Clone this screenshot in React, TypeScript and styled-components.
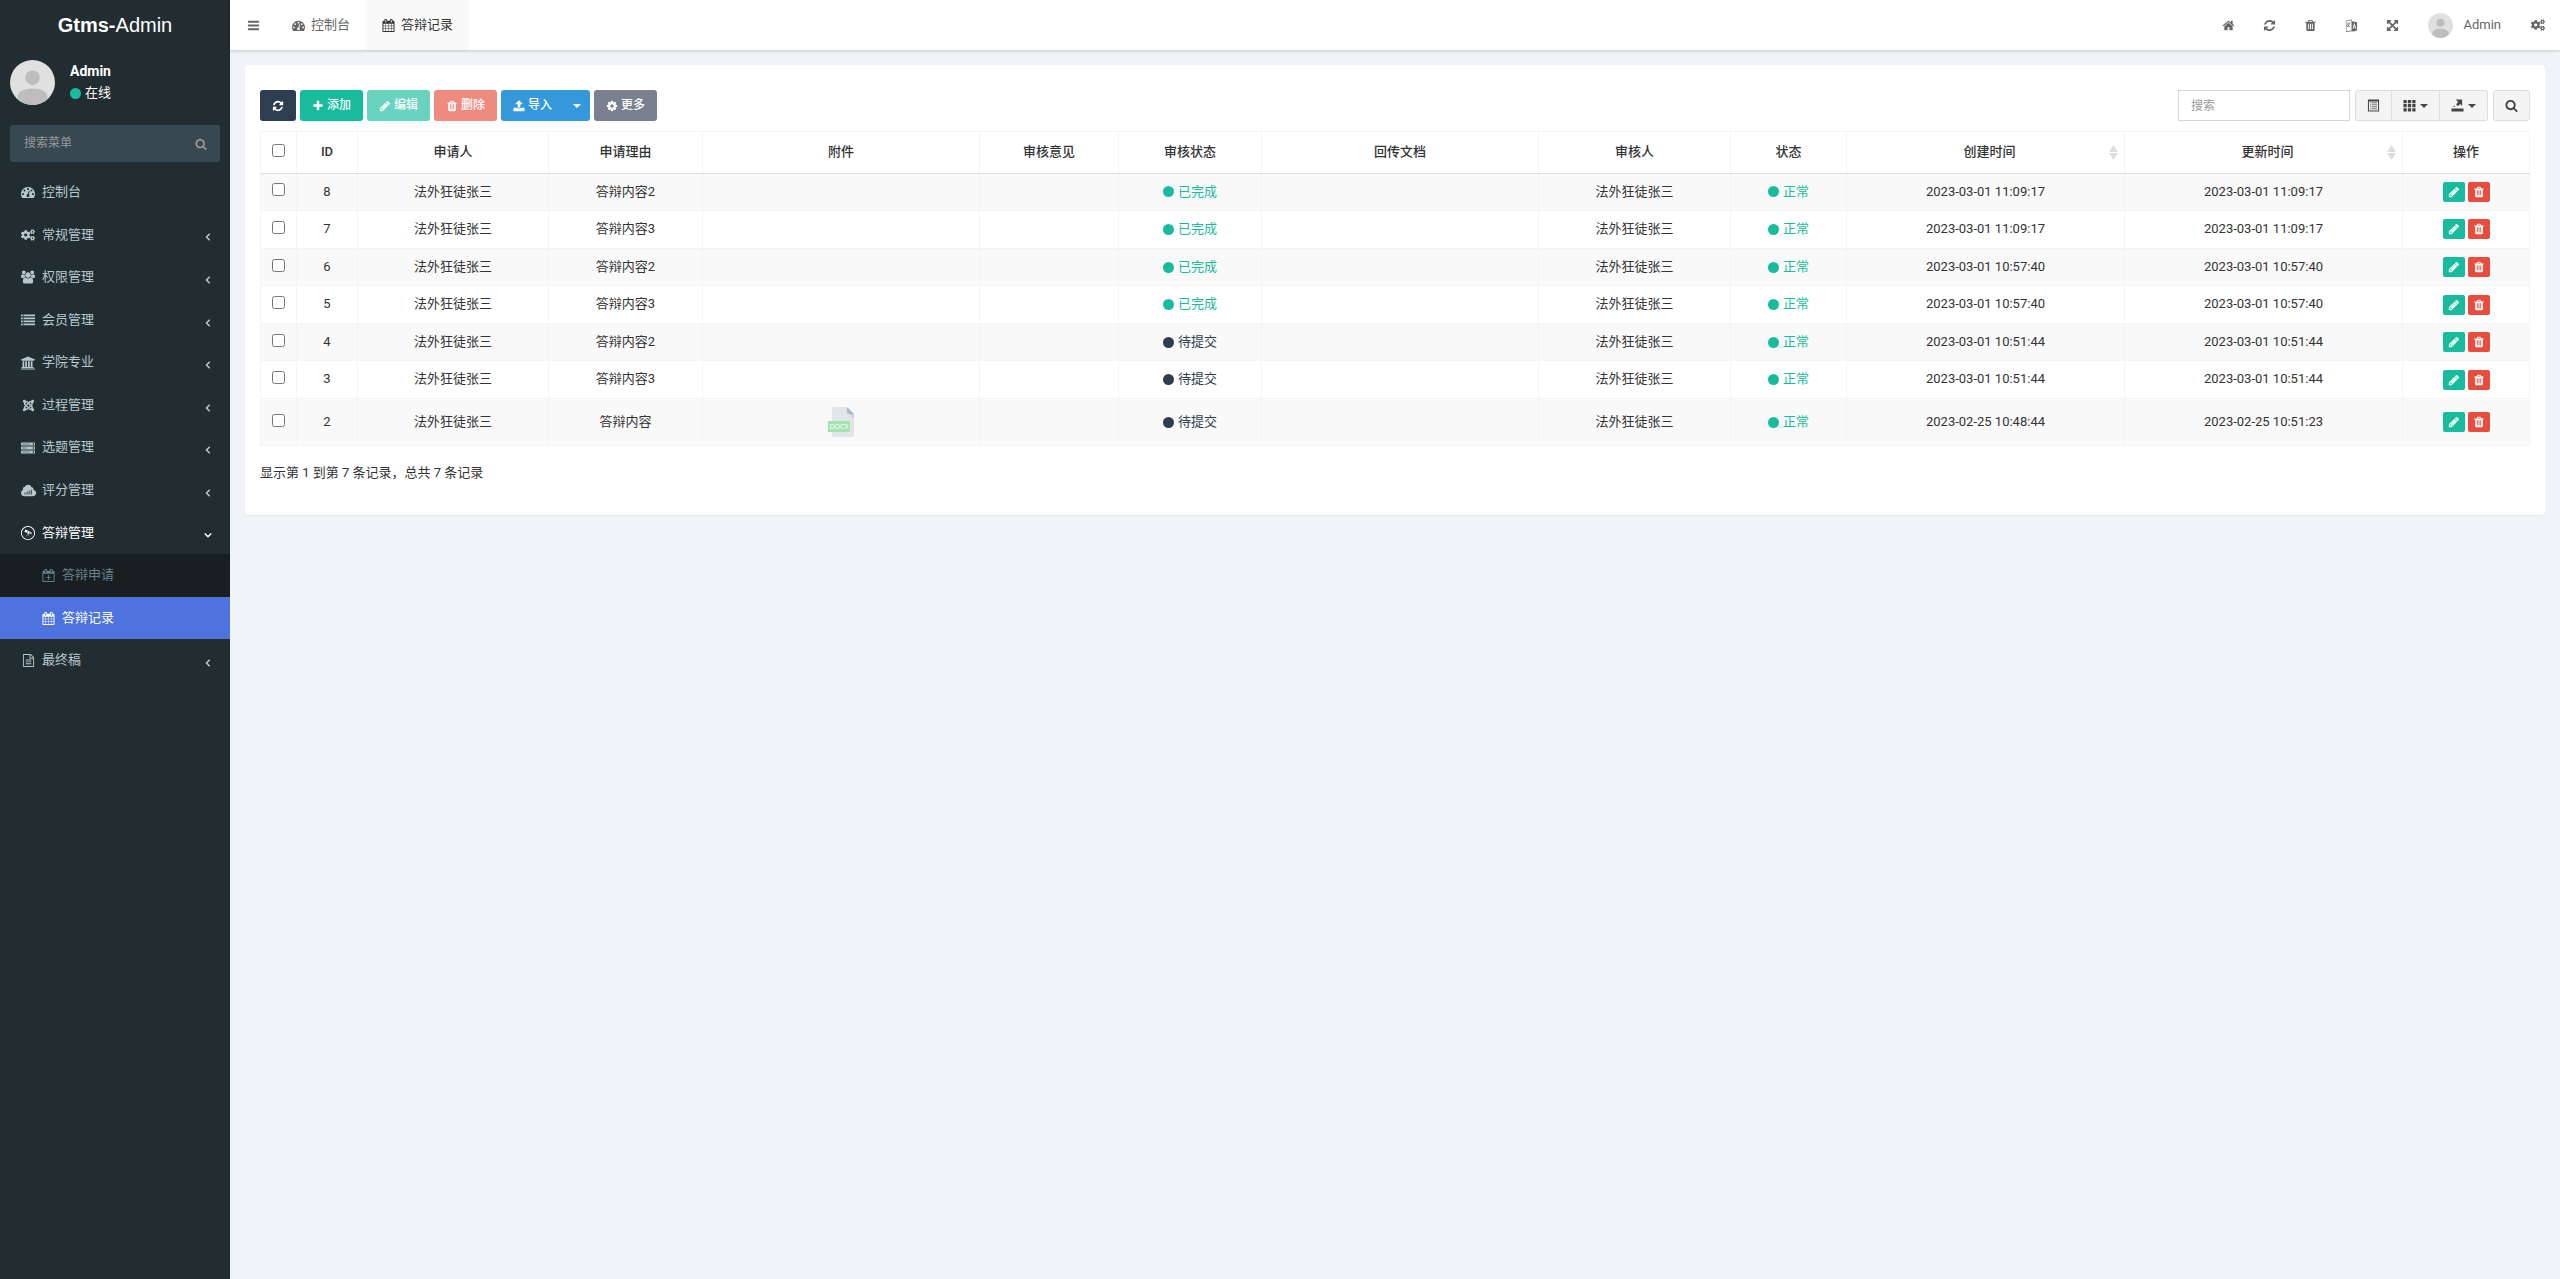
import React, { useState } from "react";
import styled, { createGlobalStyle, css } from "styled-components";
import { FaCogs, FaJoomla, FaWpexplorer } from "react-icons/fa";

const GlobalStyle = createGlobalStyle`
  * { box-sizing: border-box; }
  body {
    margin: 0;
    background: #f0f3f7;
    color: #333;
    font-family: Roboto, "Noto Sans CJK SC", sans-serif;
    font-size: 13px;
    line-height: 1.43;
  }
  button, input { font: inherit; }
  button { cursor: pointer; }
  a { color: inherit; text-decoration: none; }
`;

/* ---------- icons ---------- */

const PATHS = {
  refresh:
    "M1639 1056q0 5-1 7-64 268-268 434.5t-478 166.5q-146 0-282.5-55t-243.5-157l-129 129q-19 19-45 19t-45-19-19-45v-448q0-26 19-45t45-19h448q26 0 45 19t19 45-19 45l-137 137q71 66 161 102t187 36q134 0 250-65t186-179q11-17 53-117 8-23 30-23h192q13 0 22.5 9.5t9.5 22.5zm25-800v448q0 26-19 45t-45 19h-448q-26 0-45-19t-19-45 19-45l138-138q-148-137-349-137-134 0-250 65t-186 179q-11 17-53 117-8 23-30 23h-199q-13 0-22.5-9.5t-9.5-22.5v-7q65-268 270-434.5t480-166.5q146 0 284 55.5t245 156.5l130-129q19-19 45-19t45 19 19 45z",
  search:
    "M1216 832q0-185-131.5-316.5t-316.5-131.5-316.5 131.5-131.5 316.5 131.5 316.5 316.5 131.5 316.5-131.5 131.5-316.5zm512 832q0 52-38 90t-90 38q-54 0-90-38l-343-342q-179 124-399 124-143 0-273.5-55.5t-225-150-150-225-55.5-273.5 55.5-273.5 150-225 225-150 273.5-55.5 273.5 55.5 225 150 150 225 55.5 273.5q0 220-124 399l343 343q37 37 37 90z",
  bars:
    "M1664 1344v128q0 26-19 45t-45 19h-1408q-26 0-45-19t-19-45v-128q0-26 19-45t45-19h1408q26 0 45 19t19 45zm0-512v128q0 26-19 45t-45 19h-1408q-26 0-45-19t-19-45v-128q0-26 19-45t45-19h1408q26 0 45 19t19 45zm0-512v128q0 26-19 45t-45 19h-1408q-26 0-45-19t-19-45v-128q0-26 19-45t45-19h1408q26 0 45 19t19 45z",
  plus:
    "M1600 736v192q0 40-28 68t-68 28h-416v416q0 40-28 68t-68 28h-192q-40 0-68-28t-28-68v-416h-416q-40 0-68-28t-28-68v-192q0-40 28-68t68-28h416v-416q0-40 28-68t68-28h192q40 0 68 28t28 68v416h416q40 0 68 28t28 68z",
  dashboard:
    "M384 1152q0-53-37.5-90.5t-90.5-37.5-90.5 37.5-37.5 90.5 37.5 90.5 90.5 37.5 90.5-37.5 37.5-90.5zm192-448q0-53-37.5-90.5t-90.5-37.5-90.5 37.5-37.5 90.5 37.5 90.5 90.5 37.5 90.5-37.5 37.5-90.5zm428 481l101-382q6-26-7.5-48.5t-38.5-29.5-48 6.5-30 39.5l-101 382q-60 5-107 43.5t-63 98.5q-20 77 20 146t117 89 146-20 89-117q16-60-6-117t-72-91zm660-33q0-53-37.5-90.5t-90.5-37.5-90.5 37.5-37.5 90.5 37.5 90.5 90.5 37.5 90.5-37.5 37.5-90.5zm-640-640q0-53-37.5-90.5t-90.5-37.5-90.5 37.5-37.5 90.5 37.5 90.5 90.5 37.5 90.5-37.5 37.5-90.5zm448 192q0-53-37.5-90.5t-90.5-37.5-90.5 37.5-37.5 90.5 37.5 90.5 90.5 37.5 90.5-37.5 37.5-90.5zm320 448q0 261-141 483-19 29-54 29h-1402q-35 0-54-29-141-221-141-483 0-182 71-348t191-286 286-191 348-71 348 71 286 191 191 286 71 348z",
  home:
    "M1472 992v480q0 26-19 45t-45 19h-384v-384h-256v384h-384q-26 0-45-19t-19-45v-480q0-1 .5-3t.5-3l575-474 575 474q1 2 1 6zm223-69l-62 74q-8 9-21 11h-3q-13 0-21-7l-692-577-692 577q-12 8-24 7-13-2-21-11l-62-74q-8-10-7-23.5t11-21.5l719-599q32-26 76-26t76 26l244 204v-195q0-14 9-23t23-9h192q14 0 23 9t9 23v408l219 182q10 8 11 21.5t-7 23.5z",
  trash:
    "M704 1376v-704q0-14-9-23t-23-9h-64q-14 0-23 9t-9 23v704q0 14 9 23t23 9h64q14 0 23-9t9-23zm256 0v-704q0-14-9-23t-23-9h-64q-14 0-23 9t-9 23v704q0 14 9 23t23 9h64q14 0 23-9t9-23zm256 0v-704q0-14-9-23t-23-9h-64q-14 0-23 9t-9 23v704q0 14 9 23t23 9h64q14 0 23-9t9-23zm-544-992h448l-48-117q-7-9-17-11h-317q-10 2-17 11zm928 32v64q0 14-9 23t-23 9h-96v948q0 83-47 143.5t-113 60.5h-832q-66 0-113-58.5t-47-141.5v-952h-96q-14 0-23-9t-9-23v-64q0-14 9-23t23-9h309l70-167q15-37 54-63t79-26h320q40 0 79 26t54 63l70 167h309q14 0 23 9t9 23z",
  pencil:
    "M491 1536l91-91-235-235-91 91v107h128v128h107zm523-928q0-22-22-22-10 0-17 7l-542 542q-7 7-7 17 0 22 22 22 10 0 17-7l542-542q7-7 7-17zm-54-192l416 416-832 832h-416v-416zm683 96q0 53-37 90l-166 166-416-416 166-165q36-38 90-38 53 0 91 38l235 234q37 39 37 91z",
  cog:
    "M1152 896q0-106-75-181t-181-75-181 75-75 181 75 181 181 75 181-75 75-181zm512-109v222q0 12-8 23t-20 13l-185 28q-19 54-39 91 35 50 107 138 10 12 10 25t-9 23q-27 37-99 108t-94 71q-12 0-26-9l-138-108q-44 23-91 38-16 136-29 186-7 28-36 28h-222q-14 0-24.5-8.5t-11.5-21.5l-28-184q-49-16-90-37l-141 107q-10 9-25 9-14 0-25-11-126-114-165-168-7-10-7-23 0-12 8-23 15-21 51-66.5t54-70.5q-27-50-41-99l-183-27q-13-2-21-12.5t-8-23.5v-222q0-12 8-23t19-13l186-28q14-46 39-92-40-57-107-138-10-12-10-24 0-10 9-23 26-36 98.5-107.5t94.5-71.5q13 0 26 10l138 107q44-23 91-38 16-136 29-186 7-28 36-28h222q14 0 24.5 8.5t11.5 21.5l28 184q49 16 90 37l142-107q9-9 24-9 13 0 25 10 129 119 165 170 7 8 7 22 0 12-8 23-15 21-51 66.5t-54 70.5q26 50 41 98l183 28q13 2 21 12.5t8 23.5z",
  upload:
    "M1344 1472q0-26-19-45t-45-19-45 19-19 45 19 45 45 19 45-19 19-45zm256 0q0-26-19-45t-45-19-45 19-19 45 19 45 45 19 45-19 19-45zm128-224v320q0 40-28 68t-68 28h-1472q-40 0-68-28t-28-68v-320q0-40 28-68t68-28h427q21 56 70.5 92t110.5 36h256q61 0 110.5-36t70.5-92h427q40 0 68 28t28 68zm-325-648q-17 40-59 40h-256v448q0 26-19 45t-45 19h-256q-26 0-45-19t-19-45v-448h-256q-42 0-59-40-17-39 14-69l448-448q18-19 45-19t45 19l448 448q31 30 14 69z",
  calendar:
    "M192 1664h288v-288h-288v288zm352 0h320v-288h-320v288zm-352-352h288v-320h-288v320zm352 0h320v-320h-320v320zm-352-384h288v-288h-288v288zm736 736h320v-288h-320v288zm-384-736h320v-288h-320v288zm768 736h288v-288h-288v288zm-384-352h320v-320h-320v320zm-352-864v-288q0-13-9.5-22.5t-22.5-9.5h-64q-13 0-22.5 9.5t-9.5 22.5v288q0 13 9.5 22.5t22.5 9.5h64q13 0 22.5-9.5t9.5-22.5zm736 864h288v-320h-288v320zm-384-384h320v-288h-320v288zm384 0h288v-288h-288v288zm32-480v-288q0-13-9.5-22.5t-22.5-9.5h-64q-13 0-22.5 9.5t-9.5 22.5v288q0 13 9.5 22.5t22.5 9.5h64q13 0 22.5-9.5t9.5-22.5zm384-64v1280q0 52-38 90t-90 38h-1408q-52 0-90-38t-38-90v-1280q0-52 38-90t90-38h128v-96q0-66 47-113t113-47h64q66 0 113 47t47 113v96h384v-96q0-66 47-113t113-47h64q66 0 113 47t47 113v96h128q52 0 90 38t38 90z",
  calendarPlus:
    "M192 1664h1408v-1024h-1408zM576 448v-288q0-13-9.5-22.5t-22.5-9.5h-64q-13 0-22.5 9.5t-9.5 22.5v288q0 13 9.5 22.5t22.5 9.5h64q13 0 22.5-9.5t9.5-22.5zm768 0v-288q0-13-9.5-22.5t-22.5-9.5h-64q-13 0-22.5 9.5t-9.5 22.5v288q0 13 9.5 22.5t22.5 9.5h64q13 0 22.5-9.5t9.5-22.5zm384-64v1280q0 52-38 90t-90 38h-1408q-52 0-90-38t-38-90v-1280q0-52 38-90t90-38h128v-96q0-66 47-113t113-47h64q66 0 113 47t47 113v96h384v-96q0-66 47-113t113-47h64q66 0 113 47t47 113v96h128q52 0 90 38t38 90zM832 832h128v256h256v128h-256v256h-128v-256h-256v-128h256z",
  users:
    "M593 896q-162 5-265 128h-134q-82 0-138-40.5t-56-118.5q0-353 124-353 6 0 43.5 21t97.5 42.5 119 21.5q67 0 133-23-5 37-5 66 0 139 81 256zm1071 637q0 120-73 189.5t-194 69.5h-874q-121 0-194-69.5t-73-189.5q0-53 3.5-103.5t14-109 26.5-108.5 43-97.5 62-81 85.5-53.5 111.5-20q10 0 43 21.5t73 48 107 48 135 21.500 135-21.500 107-48 73-48 43-21.500q61 0 111.500 20t85.500 53.500 62 81 43 97.500 26.500 108.500 14 109 3.500 103.500zm-1024-1277q0 106-75 181t-181 75-181-75-75-181 75-181 181-75 181 75 75 181zm704 384q0 159-112.500 271.500t-271.500 112.500-271.500-112.500-112.500-271.500 112.500-271.500 271.500-112.500 271.500 112.500 112.500 271.500zm576 225q0 78-56 118.500t-138 40.500h-134q-103-123-265-128 81-117 81-256 0-29-5-66 66 23 133 23 59 0 119-21.500t97.500-42.500 43.500-21q124 0 124 353zm-128-609q0 106-75 181t-181 75-181-75-75-181 75-181 181-75 181 75 75 181z",
  list:
    "M0 192h224v224h-224zM0 576h224v224h-224zM0 960h224v224h-224zM0 1344h224v224h-224zM320 192h1472v224h-1472zM320 576h1472v224h-1472zM320 960h1472v224h-1472zM320 1344h1472v224h-1472z",
  bank:
    "M896 64l896 384v96h-128v64h-1536v-64h-128v-96zM192 672h224v736h128v-736h224v736h128v-736h224v736h128v-736h224v736h128v128h-1536v-128h128zM0 1600h1792v128h-1792z",
  server:
    "M64 192h1664q64 0 64 64v256q0 64-64 64h-1664q-64 0-64-64v-256q0-64 64-64zM128 352v64h1024v-64zM1500 300v168h168v-168zM64 704h1664q64 0 64 64v256q0 64-64 64h-1664q-64 0-64-64v-256q0-64 64-64zM128 864v64h640v-64zM1500 812v168h168v-168zM64 1216h1664q64 0 64 64v256q0 64-64 64h-1664q-64 0-64-64v-256q0-64 64-64zM128 1376v64h1024v-64zM1500 1324v168h168v-168z",
  cloudBars:
    "M1480 800q30-60 0-140-60-150-220-150-50-260-350-300-330-20-450 250-210 10-240 230-10 60 20 110-240 110-240 370 0 180 110 290 110 110 290 110h1000q180 0 290-110 110-120 110-290 0-270-320-370zM420 1150v226h110v-226zM670 1040v336h110v-336zM920 930v446h110v-446zM1170 800v576h110v-576z",
  arrows:
    "M1411 541l-355 355 355 355 144-144q29-31 70-14 39 17 39 59v448q0 26-19 45t-45 19h-448q-42 0-59-40-17-39 14-69l144-144-355-355-355 355 144 144q31 30 14 69-17 40-59 40h-448q-26 0-45-19t-19-45v-448q0-42 40-59 39-17 69 14l144 144 355-355-355-355-144 144q-19 19-45 19-12 0-24-5-40-17-40-59v-448q0-26 19-45t45-19h448q42 0 59 40 17 39-14 69l-144 144 355 355 355-355-144-144q-31-30-14-69 17-40 59-40h448q26 0 45 19t19 45v448q0 42-39 59-13 5-25 5-26 0-45-19z",
  file:
    "M1596 380q28 28 48 76t20 88v1152q0 40-28 68t-68 28h-1344q-40 0-68-28t-28-68v-1600q0-40 28-68t68-28h896q40 0 88 20t76 48zm-444-244v376h376q-10-29-22-41l-313-313q-12-12-41-22zm384 1528v-1024h-416q-40 0-68-28t-28-68v-416h-768v1536h1280zm-1024-864q0-14 9-23t23-9h704q14 0 23 9t9 23v64q0 14-9 23t-23 9h-704q-14 0-23-9t-9-23v-64zm736 224q14 0 23 9t9 23v64q0 14-9 23t-23 9h-704q-14 0-23-9t-9-23v-64q0-14 9-23t23-9h704zm0 256q14 0 23 9t9 23v64q0 14-9 23t-23 9h-704q-14 0-23-9t-9-23v-64q0-14 9-23t23-9h704z",
  language:
    "M128 256l832-192v240l704 160v1120l-512 144-192-56-832 120zM200 320v1380l700-110v-1430zM330 560l460-90v90l-150 30q-20 190-110 330 90 90 230 120l-40 90q-150-40-260-140-90 90-180 120l-40-90q90-30 160-110-70-90-100-210h90q20 80 70 140 60-100 80-230l-210 40zM1250 620l-200 700 110 20 40-160h200l50 190 110 20-210-760zM1290 780l70 290h-130z",
  listAlt:
    "M128 64h1536v1664h-1536zM270 340v1246h1252v-1246zM400 480h128v110h-128zM620 480h772v110h-772zM400 760h128v110h-128zM620 760h772v110h-772zM400 1040h128v110h-128zM620 1040h772v110h-772zM400 1320h128v110h-128zM620 1320h772v110h-772z",
  grid:
    "M64 128h448v448h-448zM672 128h448v448h-448zM1280 128h448v448h-448zM64 704h448v448h-448zM672 704h448v448h-448zM1280 704h448v448h-448zM64 1280h448v448h-448zM672 1280h448v448h-448zM1280 1280h448v448h-448z",
  exportBox:
    "M64 1312h1664v416h-1664zM640 64h896v896l-280-280q-180 110-250 300-180-60-300-180 130-260 290-380zM320 1100q20-120 100-200l120 120q-40 30-60 80z",
};

type IconName = keyof typeof PATHS;

const Svg = styled.svg`
  display: block;
  flex: none;
  fill: currentColor;
`;

const Icon = ({ name, size = 13 }: { name: IconName; size?: number }) => (
  <Svg
    width={size}
    height={size}
    viewBox={name === "users" ? "0 0 1920 1792" : "0 0 1792 1792"}
    aria-hidden="true"
  >
    <path fillRule="evenodd" d={PATHS[name]} />
  </Svg>
);

const Caret = () => (
  <Svg width="8" height="4" viewBox="0 0 8 4" aria-hidden="true">
    <path d="M0 0h8L4 4z" />
  </Svg>
);

const Chevron = ({ open }: { open?: boolean }) => (
  <Svg width="8" height="8" viewBox="0 0 8 8" aria-hidden="true">
    <path
      d={open ? "M0.8 2.5L4 5.7 7.2 2.5" : "M5.7 0.8L2.5 4 5.7 7.2"}
      fill="none"
      stroke="currentColor"
      strokeWidth="1.5"
    />
  </Svg>
);

const SortArrows = () => (
  <Svg width="9" height="15" viewBox="0 0 9 15" aria-hidden="true">
    <path d="M0 7L4.5 0 9 7zM0 8h9L4.5 15z" fill="#ddd" />
  </Svg>
);

const Avatar = ({ size }: { size: number }) => (
  <Svg width={size} height={size} viewBox="0 0 45 45" role="img" aria-label="Admin">
    <clipPath id={`face-${size}`}>
      <circle cx="22.5" cy="22.5" r="22.5" />
    </clipPath>
    <g clipPath={`url(#face-${size})`}>
      <rect width="45" height="45" fill="#e0e0e0" />
      <circle cx="22.5" cy="17.7" r="7.3" fill="#bdbdbd" />
      <path d="M7.5 45v-7c0-6 6-9.500 15-9.500s15 3.500 15 9.500v7z" fill="#bdbdbd" />
    </g>
  </Svg>
);

const DocxIcon = styled.svg`
  display: block;
  margin: 0 auto;
`;

/* ---------- shell ---------- */

const Shell = styled.div`
  display: flex;
  min-height: 100vh;
`;

const Sidebar = styled.aside`
  flex: none;
  width: 230px;
  background: #222d32;
  color: #b8c7ce;
`;

const Logo = styled.a`
  display: block;
  height: 50px;
  line-height: 50px;
  text-align: center;
  color: #fff;
  font-family: "Liberation Sans", Arial, sans-serif;
  font-size: 20px;
`;

const UserPanel = styled.div`
  display: flex;
  gap: 15px;
  padding: 10px;
  color: #fff;
`;

const UserInfo = styled.div`
  display: flex;
  flex-direction: column;
  align-items: flex-start;
  gap: 3px;
  padding-top: 2px;
`;

const UserName = styled.strong`
  font-size: 14px;
  line-height: 19px;
`;

const Status = styled.span<{ $color?: string }>`
  display: flex;
  align-items: center;
  justify-content: center;
  gap: 4px;
  color: ${(p) => p.$color};

  &::before {
    content: "";
    width: 11px;
    height: 11px;
    border-radius: 50%;
    background: ${(p) => p.$color || "#18bc9c"};
  }
`;

const MenuSearch = styled.form`
  display: flex;
  height: 37px;
  margin: 10px 10px 9px;
  border-radius: 3px;
  background: #374850;
`;

const MenuSearchInput = styled.input`
  flex: 1;
  min-width: 0;
  padding: 0 14px;
  border: 0;
  background: transparent;
  color: #b8c7ce;
  font-size: 12px;
  outline: 0;
  &::placeholder { color: #999; }
`;

const MenuSearchButton = styled.button`
  display: grid;
  place-items: center;
  width: 38px;
  padding: 0;
  border: 0;
  background: transparent;
  color: #999;
`;

const Menu = styled.ul`
  margin: 0;
  padding: 0;
  list-style: none;
`;

const SubMenu = styled(Menu)`
  background: #181f22;
`;

const MenuLink = styled.a<{ $nested?: boolean; $tone?: "open" | "active" | "dim" }>`
  display: flex;
  align-items: center;
  gap: 4px;
  padding: 12px 18px 12px ${(p) => (p.$nested ? 38 : 18)}px;
  ${(p) => p.$tone === "open" && css`color: #fff;`}
  ${(p) => p.$tone === "dim" && css`color: #67818b;`}
  ${(p) => p.$tone === "active" && css`color: #fff; background: #4e73df;`}
`;

const MenuIcon = styled.span`
  display: grid;
  place-items: center;
  width: 20px;
  height: 14px;
`;

const MenuText = styled.span`
  flex: 1;
`;

const ChevronBox = styled.span`
  padding-top: 5px;
`;

const Main = styled.div`
  flex: 1;
  min-width: 0;
`;

const Header = styled.header`
  display: flex;
  height: 50px;
  background: #fff;
  color: #666;
  box-shadow: 0 1px 3px rgba(0, 21, 41, 0.2);
`;

const HeaderButton = styled.button<{ $width: number }>`
  display: grid;
  place-items: center;
  width: ${(p) => p.$width}px;
  padding: 0;
  border: 0;
  background: transparent;
  color: inherit;
`;

const Tab = styled.a<{ $active?: boolean }>`
  display: flex;
  align-items: center;
  gap: 6px;
  padding: 0 16px;
  ${(p) => p.$active && css`color: #333; background: #f9f9f9;`}
`;

const HeaderTools = styled.nav`
  display: flex;
  margin-left: auto;
`;

const Profile = styled.a`
  display: flex;
  align-items: center;
  gap: 10px;
  padding: 0 15px;
`;

/* ---------- panel ---------- */

const Panel = styled.section`
  margin: 15px;
  padding: 25px 15px 32px;
  border-radius: 3px;
  background: #fff;
  box-shadow: 0 1px 1px rgba(0, 0, 0, 0.05);
`;

const Toolbar = styled.div`
  display: flex;
  justify-content: space-between;
  margin-bottom: 10px;
`;

const ToolGroup = styled.div<{ $gap: number }>`
  display: flex;
  gap: ${(p) => p.$gap}px;
`;

const Button = styled.button<{ $bg: string }>`
  display: inline-flex;
  align-items: center;
  gap: 3px;
  height: 31px;
  padding: 0 12px;
  border: 0;
  border-radius: 3px;
  background: ${(p) => p.$bg};
  color: #fff;
  font-size: 12px;
  font-weight: 500;
  &:disabled { opacity: 0.65; cursor: not-allowed; }
`;

const SplitButton = styled.div`
  display: flex;
  & > :first-child { border-radius: 3px 0 0 3px; }
  & > :last-child { border-radius: 0 3px 3px 0; padding: 0 9px; }
`;

const SearchInput = styled.input`
  width: 172px;
  height: 31px;
  padding: 0 12px;
  border: 1px solid #d2d6de;
  background: #fff;
  font-size: 12px;
  outline: 0;
  &::placeholder { color: #999; }
`;

const Segments = styled.div`
  display: flex;
  & > * { margin-left: -1px; border-radius: 0; }
  & > :first-child { margin-left: 0; border-radius: 3px 0 0 3px; }
  & > :last-child { border-radius: 0 3px 3px 0; }
  & > :only-child { border-radius: 3px; }
`;

const ToolButton = styled.button`
  display: inline-flex;
  align-items: center;
  gap: 4px;
  height: 31px;
  padding: 0 11px;
  border: 1px solid #ddd;
  background: #f4f4f4;
  color: #444;
`;

const Table = styled.table`
  width: 100%;
  table-layout: fixed;
  border-collapse: collapse;
  text-align: center;
`;

const Th = styled.th`
  padding: 11px 8px;
  border: 1px solid #f4f4f4;
  border-bottom: 1px solid #ddd;
  font-weight: 500;
`;

const SortTh = styled(Th)`
  padding: 0 6px 0 23px;
`;

const SortButton = styled.button`
  display: flex;
  align-items: center;
  width: 100%;
  padding: 0;
  border: 0;
  background: transparent;
  color: inherit;
  font-weight: 500;
`;

const SortLabel = styled.span`
  flex: 1;
`;

const Row = styled.tr`
  &:nth-child(odd) { background: #f9f9f9; }
`;

const Td = styled.td`
  padding: 9px 8px;
  border: 1px solid #f4f4f4;
`;

const MediaTd = styled(Td)`
  padding: 8px;
`;

const Check = styled.input`
  display: block;
  width: 13px;
  height: 13px;
  margin: 0 auto 4px;
`;

const Actions = styled.div`
  display: flex;
  justify-content: center;
  gap: 3px;
`;

const IconButton = styled.button<{ $bg: string }>`
  display: grid;
  place-items: center;
  width: 22px;
  height: 20px;
  padding: 0;
  border: 0;
  border-radius: 2px;
  background: ${(p) => p.$bg};
  color: #fff;
`;

const Summary = styled.p`
  margin: 18px 0 0;
`;

/* ---------- data ---------- */

const GREEN = "#18bc9c";
const NAVY = "#2c3e50";
const RED = "#e74c3c";

const MENU: { label: string; icon: React.ReactNode; leaf?: boolean }[] = [
  { label: "控制台", icon: <Icon name="dashboard" size={14} />, leaf: true },
  { label: "常规管理", icon: <FaCogs size={14} /> },
  { label: "权限管理", icon: <Icon name="users" size={14} /> },
  { label: "会员管理", icon: <Icon name="list" size={14} /> },
  { label: "学院专业", icon: <Icon name="bank" size={14} /> },
  { label: "过程管理", icon: <FaJoomla size={13} /> },
  { label: "选题管理", icon: <Icon name="server" size={14} /> },
  { label: "评分管理", icon: <Icon name="cloudBars" size={15} /> },
];

const COLUMNS = [
  { label: "申请人", width: 191 },
  { label: "申请理由", width: 154 },
  { label: "附件", width: 277 },
  { label: "审核意见", width: 139 },
  { label: "审核状态", width: 143 },
  { label: "回传文档", width: 277 },
  { label: "审核人", width: 192 },
  { label: "状态", width: 116 },
  { label: "创建时间", width: 278, sortable: true },
  { label: "更新时间", width: 278, sortable: true },
  { label: "操作", width: 127 },
];

const NAME = "法外狂徒张三";

const ROWS = [
  { id: 8, reason: "答辩内容2", done: true, created: "2023-03-01 11:09:17", updated: "2023-03-01 11:09:17" },
  { id: 7, reason: "答辩内容3", done: true, created: "2023-03-01 11:09:17", updated: "2023-03-01 11:09:17" },
  { id: 6, reason: "答辩内容2", done: true, created: "2023-03-01 10:57:40", updated: "2023-03-01 10:57:40" },
  { id: 5, reason: "答辩内容3", done: true, created: "2023-03-01 10:57:40", updated: "2023-03-01 10:57:40" },
  { id: 4, reason: "答辩内容2", done: false, created: "2023-03-01 10:51:44", updated: "2023-03-01 10:51:44" },
  { id: 3, reason: "答辩内容3", done: false, created: "2023-03-01 10:51:44", updated: "2023-03-01 10:51:44" },
  { id: 2, reason: "答辩内容", done: false, file: true, created: "2023-02-25 10:48:44", updated: "2023-02-25 10:51:23" },
];

const Docx = () => (
  <DocxIcon width="26" height="30" viewBox="0 0 26 30" role="img" aria-label="DOCX">
    <path d="M6 0h13l7 7v21a2 2 0 0 1-2 2H6a2 2 0 0 1-2-2V2a2 2 0 0 1 2-2z" fill="#e2e5e7" />
    <path d="M19 0l7 7h-5a2 2 0 0 1-2-2z" fill="#b0b7bd" />
    <path d="M21 7h5v5z" fill="#cad1d8" />
    <rect y="14" width="22" height="11" fill="#a5e2b2" />
    <text x="11" y="22" textAnchor="middle" fontSize="7" fontFamily="Noto Sans, sans-serif" fill="#fff">
      DOCX
    </text>
  </DocxIcon>
);

const App = () => {
  const [picked, setPicked] = useState<number[]>([]);
  const toggle = (id: number) =>
    setPicked((ids) => (ids.includes(id) ? ids.filter((x) => x !== id) : [...ids, id]));
  const allPicked = picked.length === ROWS.length;

  return (
    <Shell>
      <GlobalStyle />
      <Sidebar>
        <Logo href="#"><b>Gtms-</b>Admin</Logo>
        <UserPanel>
          <Avatar size={45} />
          <UserInfo>
            <UserName>Admin</UserName>
            <Status>在线</Status>
          </UserInfo>
        </UserPanel>
        <MenuSearch onSubmit={(e) => e.preventDefault()}>
          <MenuSearchInput placeholder="搜索菜单" aria-label="搜索菜单" />
          <MenuSearchButton aria-label="搜索菜单"><Icon name="search" size={12} /></MenuSearchButton>
        </MenuSearch>
        <Menu>
          {MENU.map((m) => (
            <li key={m.label}>
              <MenuLink href="#">
                <MenuIcon>{m.icon}</MenuIcon>
                <MenuText>{m.label}</MenuText>
                {!m.leaf && <ChevronBox><Chevron /></ChevronBox>}
              </MenuLink>
            </li>
          ))}
          <li>
            <MenuLink href="#" $tone="open">
              <MenuIcon><FaWpexplorer size={14} /></MenuIcon>
              <MenuText>答辩管理</MenuText>
              <ChevronBox><Chevron open /></ChevronBox>
            </MenuLink>
            <SubMenu>
              <li>
                <MenuLink href="#" $nested $tone="dim">
                  <MenuIcon><Icon name="calendarPlus" /></MenuIcon>
                  <MenuText>答辩申请</MenuText>
                </MenuLink>
              </li>
              <li>
                <MenuLink href="#" $nested $tone="active">
                  <MenuIcon><Icon name="calendar" /></MenuIcon>
                  <MenuText>答辩记录</MenuText>
                </MenuLink>
              </li>
            </SubMenu>
          </li>
          <li>
            <MenuLink href="#">
              <MenuIcon><Icon name="file" /></MenuIcon>
              <MenuText>最终稿</MenuText>
              <ChevronBox><Chevron /></ChevronBox>
            </MenuLink>
          </li>
        </Menu>
      </Sidebar>

      <Main>
        <Header>
          <HeaderButton $width={46} aria-label="切换菜单"><Icon name="bars" /></HeaderButton>
          <Tab href="#"><Icon name="dashboard" />控制台</Tab>
          <Tab href="#" $active><Icon name="calendar" />答辩记录</Tab>
          <HeaderTools>
            <HeaderButton $width={41} aria-label="主页"><Icon name="home" /></HeaderButton>
            <HeaderButton $width={41} aria-label="刷新"><Icon name="refresh" /></HeaderButton>
            <HeaderButton $width={41} aria-label="清空缓存"><Icon name="trash" /></HeaderButton>
            <HeaderButton $width={41} aria-label="语言"><Icon name="language" /></HeaderButton>
            <HeaderButton $width={41} aria-label="全屏"><Icon name="arrows" /></HeaderButton>
            <Profile href="#"><Avatar size={25} />Admin</Profile>
            <HeaderButton $width={44} aria-label="设置"><FaCogs size={14} /></HeaderButton>
          </HeaderTools>
        </Header>

        <Panel>
          <Toolbar>
            <ToolGroup $gap={4}>
              <Button $bg={NAVY} aria-label="刷新"><Icon name="refresh" size={12} /></Button>
              <Button $bg={GREEN}><Icon name="plus" size={12} />添加</Button>
              <Button $bg={GREEN} disabled><Icon name="pencil" size={12} />编辑</Button>
              <Button $bg={RED} disabled><Icon name="trash" size={12} />删除</Button>
              <SplitButton>
                <Button $bg="#3498db"><Icon name="upload" size={12} />导入</Button>
                <Button $bg="#3498db" aria-label="导入选项"><Caret /></Button>
              </SplitButton>
              <Button $bg="#79818f"><Icon name="cog" size={12} />更多</Button>
            </ToolGroup>
            <ToolGroup $gap={5}>
              <SearchInput placeholder="搜索" aria-label="搜索" />
              <Segments>
                <ToolButton aria-label="切换视图"><Icon name="listAlt" /></ToolButton>
                <ToolButton aria-label="列"><Icon name="grid" /><Caret /></ToolButton>
                <ToolButton aria-label="导出数据"><Icon name="exportBox" /><Caret /></ToolButton>
              </Segments>
              <Segments>
                <ToolButton aria-label="普通搜索"><Icon name="search" /></ToolButton>
              </Segments>
            </ToolGroup>
          </Toolbar>

          <Table>
            <colgroup>
              <col width="36" />
              <col width="61" />
              {COLUMNS.map((c) => <col key={c.label} width={c.width} />)}
            </colgroup>
            <thead>
              <tr>
                <Th>
                  <Check
                    type="checkbox"
                    aria-label="全选"
                    checked={allPicked}
                    onChange={() => setPicked(allPicked ? [] : ROWS.map((r) => r.id))}
                  />
                </Th>
                <Th>ID</Th>
                {COLUMNS.map((c) =>
                  c.sortable ? (
                    <SortTh key={c.label}>
                      <SortButton><SortLabel>{c.label}</SortLabel><SortArrows /></SortButton>
                    </SortTh>
                  ) : (
                    <Th key={c.label}>{c.label}</Th>
                  )
                )}
              </tr>
            </thead>
            <tbody>
              {ROWS.map((r) => (
                <Row key={r.id}>
                  <Td>
                    <Check
                      type="checkbox"
                      aria-label={`选择 ${r.id}`}
                      checked={picked.includes(r.id)}
                      onChange={() => toggle(r.id)}
                    />
                  </Td>
                  <Td>{r.id}</Td>
                  <Td>{NAME}</Td>
                  <Td>{r.reason}</Td>
                  <MediaTd>{r.file && <Docx />}</MediaTd>
                  <Td />
                  <Td>
                    <Status $color={r.done ? GREEN : NAVY}>{r.done ? "已完成" : "待提交"}</Status>
                  </Td>
                  <Td />
                  <Td>{NAME}</Td>
                  <Td><Status $color={GREEN}>正常</Status></Td>
                  <Td>{r.created}</Td>
                  <Td>{r.updated}</Td>
                  <MediaTd>
                    <Actions>
                      <IconButton $bg={GREEN} aria-label="编辑"><Icon name="pencil" size={12} /></IconButton>
                      <IconButton $bg={RED} aria-label="删除"><Icon name="trash" size={12} /></IconButton>
                    </Actions>
                  </MediaTd>
                </Row>
              ))}
            </tbody>
          </Table>
          <Summary>显示第 1 到第 7 条记录，总共 7 条记录</Summary>
        </Panel>
      </Main>
    </Shell>
  );
};

export default App;
